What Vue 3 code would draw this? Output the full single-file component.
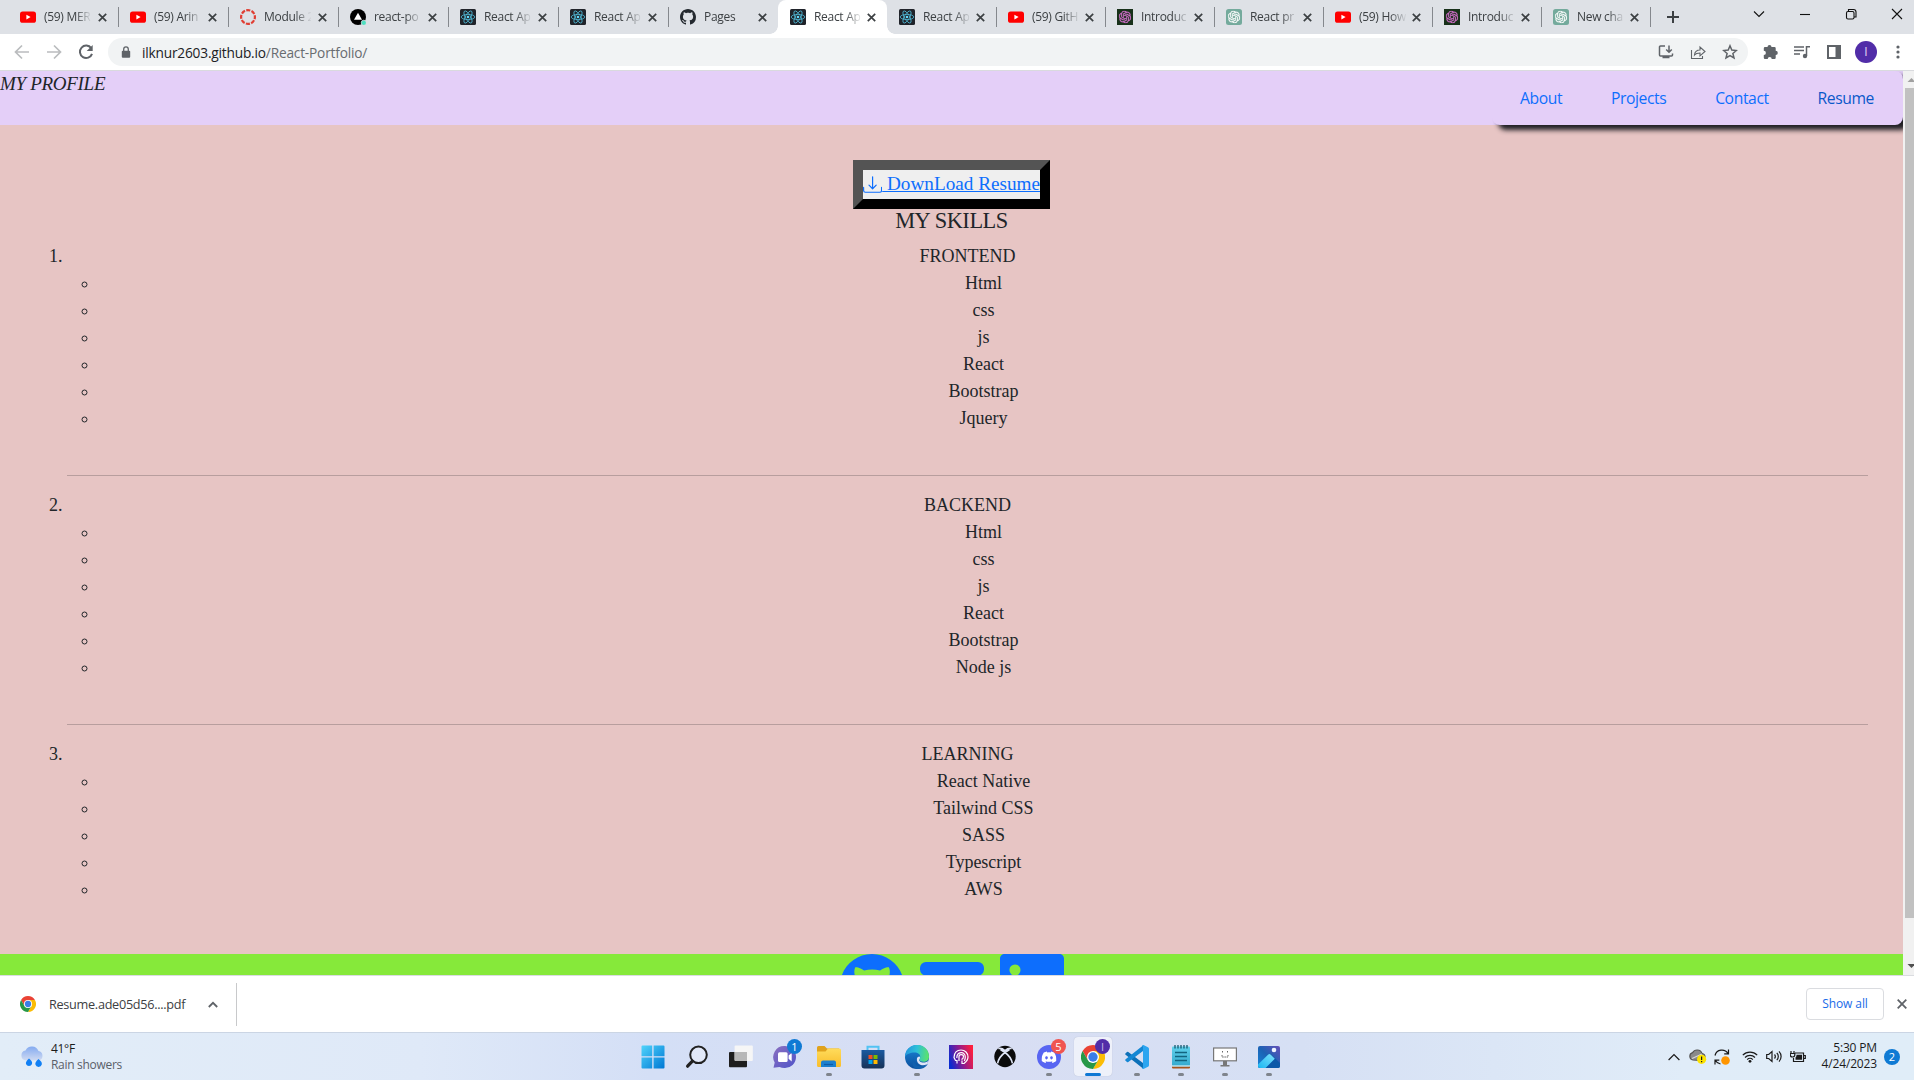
<script setup>
const tabs = [
  { icon: 'youtube', title: '(59) MER' },
  { icon: 'youtube', title: '(59) Arin' },
  { icon: 'canvas', title: 'Module 2' },
  { icon: 'netlify', title: 'react-po' },
  { icon: 'react', title: 'React Ap' },
  { icon: 'react', title: 'React Ap' },
  { icon: 'github', title: 'Pages' },
  { icon: 'react', title: 'React Ap', active: true },
  { icon: 'react', title: 'React Ap' },
  { icon: 'youtube', title: '(59) GitH' },
  { icon: 'openai-dark', title: 'Introduc' },
  { icon: 'openai', title: 'React pr' },
  { icon: 'youtube', title: '(59) How' },
  { icon: 'openai-dark', title: 'Introduc' },
  { icon: 'openai', title: 'New cha' },
]

const links = ['About', 'Projects', 'Contact', 'Resume']

const skills = [
  { name: 'FRONTEND', items: ['Html', 'css', 'js', 'React', 'Bootstrap', 'Jquery'] },
  { name: 'BACKEND', items: ['Html', 'css', 'js', 'React', 'Bootstrap', 'Node js'] },
  { name: 'LEARNING', items: ['React Native', 'Tailwind CSS', 'SASS', 'Typescript', 'AWS'] },
]

const apps = [
  { icon: 'start' },
  { icon: 'search' },
  { icon: 'taskview' },
  { icon: 'chat', badge: '1', kind: 'blue' },
  { icon: 'folder', open: true },
  { icon: 'store' },
  { icon: 'edge', open: true },
  { icon: 'mcafee' },
  { icon: 'xbox' },
  { icon: 'discord', badge: '5', kind: 'red', open: true },
  { icon: 'chrome', badge: 'I', kind: 'purple', open: true, focused: true },
  { icon: 'vscode', open: true },
  { icon: 'notepad', open: true },
  { icon: 'monitor', open: true },
  { icon: 'photos', open: true },
]
</script>

<template>
  <div class="screen">
    <svg class="defs" aria-hidden="true">
      <defs>
        <linearGradient id="g-start" x1="0" y1="0" x2="1" y2="1"><stop offset="0" stop-color="#4fd3fb" /><stop offset="1" stop-color="#0078d4" /></linearGradient>
        <linearGradient id="g-chat" x1="0" y1="0" x2="1" y2="1"><stop offset="0" stop-color="#8b6fc0" /><stop offset="1" stop-color="#4f54c8" /></linearGradient>
        <linearGradient id="g-folder" x1="0" y1="0" x2="0" y2="1"><stop offset="0" stop-color="#ffdc5c" /><stop offset="1" stop-color="#f9bd2b" /></linearGradient>
        <linearGradient id="g-store" x1="0" y1="0" x2="0" y2="1"><stop offset="0" stop-color="#1b5aa0" /><stop offset="1" stop-color="#173257" /></linearGradient>
        <linearGradient id="g-edge" x1="0" y1="0.2" x2="1" y2="0.3"><stop offset="0" stop-color="#2394dd" /><stop offset=".5" stop-color="#2fc0d8" /><stop offset="1" stop-color="#5be36b" /></linearGradient>
        <linearGradient id="g-edge2" x1="0" y1="0" x2="0" y2="1"><stop offset="0" stop-color="#1a86d8" /><stop offset="1" stop-color="#0c4f9c" /></linearGradient>
        <linearGradient id="g-mcafee" x1="0" y1="0.6" x2="1" y2="0.3"><stop offset="0" stop-color="#0b2bd0" /><stop offset=".5" stop-color="#8f1a8e" /><stop offset="1" stop-color="#ff1f3c" /></linearGradient>
        <linearGradient id="g-note" x1="0" y1="0" x2="0" y2="1"><stop offset="0" stop-color="#5fd0ea" /><stop offset="1" stop-color="#35a9cd" /></linearGradient>
        <linearGradient id="g-photo" x1="0" y1="1" x2="1" y2="0"><stop offset="0" stop-color="#1684d8" /><stop offset=".5" stop-color="#1c62b4" /><stop offset="1" stop-color="#6750b8" /></linearGradient>
        <linearGradient id="g-photo2" x1="0" y1="1" x2="1" y2="0"><stop offset="0" stop-color="#1ab6f2" /><stop offset="1" stop-color="#7ce0fb" /></linearGradient>
        <linearGradient id="g-cloud" x1="0" y1="0" x2="0" y2="1"><stop offset="0" stop-color="#83aaf0" /><stop offset="1" stop-color="#cfdaf2" /></linearGradient>
      </defs>

      <symbol id="youtube" viewBox="0 0 16 16"><rect y="2.4" width="16" height="11.4" rx="2.6" fill="#f00" /><path d="M6.4 5.7v4.8l4.2-2.4z" fill="#fff" /></symbol>
      <symbol id="canvas" viewBox="0 0 16 16"><circle cx="8" cy="8" r="6.9" fill="none" stroke="#e03e33" stroke-width="2.2" stroke-dasharray="4.1 1.32" stroke-dashoffset="2" /></symbol>
      <symbol id="netlify" viewBox="0 0 16 16"><circle cx="8" cy="8" r="8" fill="#000" /><path d="M8 3.8l4 7H4z" fill="#fff" /><circle cx="13.8" cy="13.8" r="2.6" fill="#4fe0c0" stroke="#dee1e6" stroke-width=".8" /></symbol>
      <symbol id="react" viewBox="0 0 16 16">
        <rect width="16" height="16" rx="1.5" fill="#20232a" />
        <g fill="none" stroke="#4eb4d0" stroke-width=".85"><ellipse cx="8" cy="8" rx="6.8" ry="2.6" /><ellipse cx="8" cy="8" rx="6.8" ry="2.6" transform="rotate(60 8 8)" /><ellipse cx="8" cy="8" rx="6.8" ry="2.6" transform="rotate(120 8 8)" /></g>
        <circle cx="8" cy="8" r="1.3" fill="#61dafb" />
      </symbol>
      <symbol id="github" viewBox="0 0 16 16"><path d="M8 0C3.58 0 0 3.58 0 8c0 3.54 2.29 6.53 5.47 7.59.4.07.55-.17.55-.38 0-.19-.01-.82-.01-1.49-2.01.37-2.53-.49-2.69-.94-.09-.23-.48-.94-.82-1.13-.28-.15-.68-.52-.01-.53.63-.01 1.08.58 1.23.82.72 1.21 1.87.87 2.33.66.07-.52.28-.87.51-1.07-1.78-.2-3.64-.89-3.64-3.95 0-.87.31-1.59.82-2.15-.08-.2-.36-1.02.08-2.12 0 0 .67-.21 2.2.82.64-.18 1.32-.27 2-.27s1.36.09 2 .27c1.53-1.04 2.2-.82 2.2-.82.44 1.1.16 1.92.08 2.12.51.56.82 1.27.82 2.15 0 3.07-1.87 3.75-3.65 3.95.29.25.54.73.54 1.48 0 1.07-.01 1.93-.01 2.2 0 .21.15.46.55.38A8.012 8.012 0 0 0 16 8c0-4.42-3.58-8-8-8z" fill="currentColor" /></symbol>
      <symbol id="knot" viewBox="0 0 24 24"><path fill="currentColor" d="M22.2819 9.8211a5.9847 5.9847 0 0 0-.5157-4.9108 6.0462 6.0462 0 0 0-6.5098-2.9A6.0651 6.0651 0 0 0 4.9807 4.1818a5.9847 5.9847 0 0 0-3.9977 2.9 6.0462 6.0462 0 0 0 .7427 7.0966 5.98 5.98 0 0 0 .511 4.9107 6.051 6.051 0 0 0 6.5146 2.9001A5.9847 5.9847 0 0 0 13.2599 24a6.0557 6.0557 0 0 0 5.7718-4.2058 5.9894 5.9894 0 0 0 3.9977-2.9001 6.0557 6.0557 0 0 0-.7475-7.0729zm-9.022 12.6081a4.4755 4.4755 0 0 1-2.8764-1.0408l.1419-.0804 4.7783-2.7582a.7948.7948 0 0 0 .3927-.6813v-6.7369l2.02 1.1686a.071.071 0 0 1 .038.052v5.5826a4.504 4.504 0 0 1-4.4945 4.4944zm-9.6607-4.1254a4.4708 4.4708 0 0 1-.5346-3.0137l.142.0852 4.783 2.7582a.7712.7712 0 0 0 .7806 0l5.8428-3.3685v2.3324a.0804.0804 0 0 1-.0332.0615L9.74 19.9502a4.4992 4.4992 0 0 1-6.1408-1.6464zM2.3408 7.8956a4.485 4.485 0 0 1 2.3655-1.9728V11.6a.7664.7664 0 0 0 .3879.6765l5.8144 3.3543-2.0201 1.1685a.0757.0757 0 0 1-.071 0l-4.8303-2.7865A4.504 4.504 0 0 1 2.3408 7.872zm16.5963 3.8558L13.1038 8.364 15.1192 7.2a.0757.0757 0 0 1 .071 0l4.8303 2.7913a4.4944 4.4944 0 0 1-.6765 8.1042v-5.6772a.79.79 0 0 0-.407-.667zm2.0107-3.0231l-.142-.0852-4.7735-2.7818a.7759.7759 0 0 0-.7854 0L9.409 9.2297V6.8974a.0662.0662 0 0 1 .0284-.0615l4.8303-2.7866a4.4992 4.4992 0 0 1 6.6802 4.66zM8.3065 12.863l-2.02-1.1638a.0804.0804 0 0 1-.038-.0567V6.0742a4.4992 4.4992 0 0 1 7.3757-3.4537l-.142.0805L8.704 5.459a.7948.7948 0 0 0-.3927.6813zm1.0976-2.3654l2.602-1.4998 2.6069 1.4998v2.9994l-2.5974 1.4997-2.6067-1.4997Z" /></symbol>
      <symbol id="openai" viewBox="0 0 16 16"><rect width="16" height="16" rx="2.5" fill="#74aa9c" /><use href="#knot" x="1.8" y="1.8" width="12.400" height="12.400" color="#fff" stroke="#fff" stroke-width=".5" /></symbol>
      <symbol id="openai-dark" viewBox="0 0 16 16"><rect width="16" height="16" fill="#18311a" /><use href="#knot" x="1.8" y="1.8" width="12.400" height="12.400" color="#d772d0" stroke="#d772d0" stroke-width=".5" /></symbol>

      <symbol id="chrome" viewBox="0 0 48 48">
        <path d="M24 0A24 24 0 0 0 3.2 12L13.6 30 24 24 24 12h20.8A24 24 0 0 0 24 0z" fill="#ea4335" />
        <path d="M44.8 12H24l10.4 18L24 48A24 24 0 0 0 44.8 12z" fill="#fbbc05" />
        <path d="M3.2 12 13.6 30 24 36l10.4-6L24 48A24 24 0 0 1 3.2 12z" fill="#279847" />
        <circle cx="24" cy="24" r="12" fill="#fff" /><circle cx="24" cy="24" r="9.4" fill="#3b7de8" />
      </symbol>

      <symbol id="start" viewBox="0 0 24 24"><path d="M.5 1.5a1 1 0 0 1 1-1h9.7v10.7H.5zM12.6.5h9.9a1 1 0 0 1 1 1v9.7H12.6zM.5 12.6h10.7v10.9H1.5a1 1 0 0 1-1-1zM12.6 12.6h10.9v9.9a1 1 0 0 1-1 1h-9.9z" fill="url(#g-start)" /></symbol>
      <symbol id="search" viewBox="0 0 24 24"><circle cx="13.5" cy="9.8" r="8.3" fill="#ffffff55" stroke="#222" stroke-width="2" /><path d="M7.4 16.2 2.6 21.2" stroke="#222" stroke-width="3.2" stroke-linecap="round" /></symbol>
      <symbol id="taskview" viewBox="0 0 24 24"><rect x="0" y="7" width="18" height="15.3" rx="1" fill="#1e1e1e" /><rect x="5.6" y=".6" width="18.2" height="15.4" rx="1" fill="#f6f6f6" /><path d="M5.6 7H18v9H6.6a1 1 0 0 1-1-1z" fill="#b8b8b8" /></symbol>
      <symbol id="chat" viewBox="0 0 24 24"><path d="M11.5 1A11 11 0 0 1 23 12 11 11 0 0 1 11.5 23c-1.9 0-3.5-.4-5-1.1L.5 22.8l1.200-5.300A11 11 0 0 1 11.500 1z" fill="url(#g-chat)" /><rect x="5" y="7.200" width="9.600" height="9.800" rx="1.500" fill="#fff" /><path d="M15.600 10.600 18.700 8v8.400l-3.100-2.600z" fill="#fff" /></symbol>
      <symbol id="folder" viewBox="0 0 24 24"><path d="M0 2.500A1.500 1.500 0 0 1 1.500 1h6l2.500 2.500H22V8H0z" fill="#e0a21c" /><path d="M0 6.500h8.500L11 3.500h11.500A1.500 1.500 0 0 1 24 5v15.500a1.500 1.500 0 0 1-1.500 1.500h-21A1.500 1.500 0 0 1 0 20.500z" fill="url(#g-folder)" /><path d="M4 22v-4.500A2 2 0 0 1 6 15.500h11a2 2 0 0 1 2 2V22z" fill="#1c7fce" /><path d="M7 19.500h9" stroke="#0d5ba8" stroke-width="1.200" /></symbol>
      <symbol id="store" viewBox="0 0 24 24"><path d="M6.500 6V1.800h11V6" fill="none" stroke="#53c3f3" stroke-width="2" /><path d="M.5 5h23v15.500a3 3 0 0 1-3 3h-17a3 3 0 0 1-3-3z" fill="url(#g-store)" /><path d="M7.500 10h4v4h-4z" fill="#f25022" /><path d="M12.500 10h4v4h-4z" fill="#7fba00" /><path d="M7.500 15h4v4h-4z" fill="#00a4ef" /><path d="M12.500 15h4v4h-4z" fill="#ffb900" /></symbol>
      <symbol id="edge" viewBox="0 0 24 24"><circle cx="12" cy="12" r="12" fill="url(#g-edge2)" /><path d="M0 12A12 12 0 0 1 24 11.500c0 3.400-2.500 5.300-5.500 5.300-2.800 0-4.300-1.200-4.300-2.200 0-.6 1-.9 1-2.900 0-2.300-2.200-4.200-5.700-4.200C5.500 7.500 1.200 9 0 12z" fill="url(#g-edge)" /><path d="M8.300 13.500c0 5 4 7.800 8 7.800 2.500 0 4.300-.7 5.800-2 .3-.3.600.1.400.4C20 23 16.500 24 13 24 6.500 23.500 6 16 9.500 11c-.8.900-1.200 1.600-1.200 2.500z" fill="#1260ad" /><path d="M14.200 14.600c-.5 1.400 1.300 3 4.300 3 2 0 3.800-.6 4.900-1.800-.3 1.300-.8 2.400-1.600 3.500-2 1.300-4.500 1.300-6.500.4-2.400-1-3.800-3.500-3.400-6 .3-1.400 1.300-2.300 2.600-2.300 1 1 .5 1.800-.3 3.200z" fill="#dfe6f7" /></symbol>
      <symbol id="mcafee" viewBox="0 0 24 24"><rect width="24" height="24" fill="url(#g-mcafee)" /><path d="M8 18.500v-3H6.500L5 12.500C5 7.500 8 5 12 5s7 3 7 7c0 3-2 5-4 6.500h-2v-3M10 16v-4.500c0-2.500 4.500-2.500 4.500 0 0 2-1 2.500-2 3M7.800 13c0-7 8.500-7 8.500-1 0 2-.5 3-1 4" fill="none" stroke="#fff" stroke-width="1.200" /></symbol>
      <symbol id="xbox" viewBox="0 0 24 24"><circle cx="12" cy="11.500" r="10.700" fill="#0b0b0b" /><path d="M5.300 3.600C8 2.900 10.500 4.300 12 5.500c1.500-1.200 4-2.600 6.700-1.900M12 7.500C8.500 10 5.500 14 4.600 18.300M12 7.500c3.500 2.500 6.500 6.500 7.400 10.800M12 7.500 7.500 4.500M12 7.500l4.500-3" fill="none" stroke="#dfe5f5" stroke-width="1.600" /></symbol>
      <symbol id="discord" viewBox="0 0 24 24"><circle cx="12" cy="12" r="12" fill="#5865f2" /><svg x="4.500" y="4.800" width="15" height="15" viewBox="0 0 16 16"><path fill="#fff" d="M13.545 2.907a13.200 13.200 0 0 0-3.257-1.011.05.05 0 0 0-.052.025c-.141.25-.297.577-.406.833a12.200 12.200 0 0 0-3.658 0 8 8 0 0 0-.412-.833.05.05 0 0 0-.052-.025c-1.125.194-2.220.534-3.257 1.011a.04.04 0 0 0-.021.018C.356 6.024-.213 9.047.066 12.032q.003.022.021.037a13.300 13.300 0 0 0 3.995 2.020.05.05 0 0 0 .056-.019q.463-.63.818-1.329c-.5-.2-.9-.4-1.300-.7l.3-.2c2.619 1.196 5.454 1.196 8.041 0l.3.2c-.4.300-.8.500-1.300.7.240.465.515.909.817 1.329a.05.05 0 0 0 .056.019 13.200 13.200 0 0 0 4.001-2.020.05.05 0 0 0 .021-.037c.334-3.451-.559-6.449-2.366-9.106zM5.347 10.214c-.789 0-1.438-.724-1.438-1.612s.637-1.613 1.438-1.613c.807 0 1.450.73 1.438 1.613 0 .888-.637 1.612-1.438 1.612m5.316 0c-.788 0-1.438-.724-1.438-1.612s.637-1.613 1.438-1.613c.807 0 1.451.73 1.438 1.613 0 .888-.631 1.612-1.438 1.612" /></svg></symbol>
      <symbol id="vscode" viewBox="0 0 24 24"><path d="M.6 8.300 2 7a1 1 0 0 1 1.300 0L18 18v5.500L.6 9.800a1 1 0 0 1 0-1.500z" fill="#0d70b8" /><path d="M.6 15.700 2 17a1 1 0 0 0 1.300 0L18 6V.5L.6 14.200a1 1 0 0 0 0 1.500z" fill="#1487d4" /><path d="M17 .3 18.500 0 23 2.200c.6.300 1 .9 1 1.600v16.400c0 .7-.4 1.300-1 1.600L18.500 24l-1.500-.3 1-1.200V1.500z" fill="#2ca5f0" /></symbol>
      <symbol id="notepad" viewBox="0 0 24 24"><path d="M3 21h18v1.500a1 1 0 0 1-1 1H4a1 1 0 0 1-1-1z" fill="#a5541c" /><rect x="3" y="1.500" width="18" height="20" rx="1" fill="url(#g-note)" /><path d="M3 21h18" stroke="#fff" stroke-width="1" /><path d="M6 0v3.500M9 0v3.500M12 0v3.500M15 0v3.500M18 0v3.500" stroke="#17586e" stroke-width="1.300" /><path d="M6 7.500h12M6 11.500h12M6 15.500h12" stroke="#12647f" stroke-width="1.300" /></symbol>
      <symbol id="monitor" viewBox="0 0 24 24"><rect x=".6" y="3" width="22.800" height="12.800" fill="#fff" stroke="#777" stroke-width="1.200" /><path d="M9.500 6v2M14.500 6v2M9 10v2h6v-2" fill="none" stroke="#666" stroke-width="1" stroke-dasharray="1.500 .7" /><path d="M10 16h4v4h2.500v1.500h-9V20H10z" fill="#777" /></symbol>
      <symbol id="photos" viewBox="0 0 24 24"><rect x="1" y="1" width="22" height="22" rx="2" fill="url(#g-photo)" /><path d="M1 20.500 11.500 9.800a2 2 0 0 1 2.800 0L23 18v3a2 2 0 0 1-2 2H3a2 2 0 0 1-2-2z" fill="#0b58a8" /><path d="M1 19.500 11 9.700a2 2 0 0 1 2.800 0l4 4L8.500 23H3a2 2 0 0 1-2-2z" fill="url(#g-photo2)" /><circle cx="17" cy="5" r="2.300" fill="#eef4ff" /></symbol>
    </svg>

    <!-- Tab strip -->
    <div class="tabstrip">
      <div class="tabs">
        <div v-for="(tab, i) in tabs" :key="i" class="tab" :class="{ active: tab.active, narrow: i > 6, nosep: i === 6 }">
          <svg class="favicon"><use :href="'#' + tab.icon" /></svg>
          <span class="tab-title">{{ tab.title }}</span>
          <svg class="tab-close" viewBox="0 0 9 9"><path d="M.8.8l7.400 7.400M8.200.8.8 8.200" /></svg>
        </div>
      </div>
      <svg class="new-tab" viewBox="0 0 12 12"><path d="M6 0v12M0 6h12" /></svg>
      <div class="window-controls">
        <svg viewBox="0 0 12 12"><path d="M1 3.500l5 5 5-5" /></svg>
        <svg viewBox="0 0 12 12"><path d="M1 6.500h10" /></svg>
        <svg viewBox="0 0 12 12"><rect x="1.500" y="3.500" width="7.500" height="7.500" rx="1.500" /><path d="M3.500 3.500V1.500h5a2.500 2.500 0 0 1 2.500 2.500v5H9" /></svg>
        <svg viewBox="0 0 12 12"><path d="M1 1l10 10M11 1 1 11" /></svg>
      </div>
    </div>

    <!-- Toolbar -->
    <div class="toolbar">
      <div class="nav-buttons">
        <svg class="dim" viewBox="0 0 16 16"><path d="M15 8H2M8 1.500 1.500 8 8 14.500" /></svg>
        <svg class="dim" viewBox="0 0 16 16"><path d="M1 8h13M8 1.500 14.500 8 8 14.500" /></svg>
        <svg class="bold" viewBox="0 0 16 16"><path d="M13.200 4.200A6.200 6.200 0 1 0 14 9.800" /><path class="solid" d="M14.700 1v6H8.700z" /></svg>
      </div>
      <div class="omnibox">
        <svg class="lock" viewBox="0 0 10 12"><path d="M2.700 5V3.200a2.300 2.300 0 0 1 4.600 0V5" fill="none" stroke="#5f6368" stroke-width="1.300" /><rect x=".8" y="4.700" width="8.400" height="7" rx="1" fill="#5f6368" /></svg>
        <span class="url">ilknur2603.github.io<i>/React-Portfolio/</i></span>
        <div class="omni-icons">
          <svg viewBox="0 0 16 16"><path d="M7 2H2.500a1 1 0 0 0-1 1v8a1 1 0 0 0 1 1h11a1 1 0 0 0 1-1V9.500M11 1.500v6.500M8.200 5.500 11 8.300l2.800-2.800M4.500 13.500h7" /></svg>
          <svg class="thin" viewBox="0 0 16 16"><path d="M1.500 6v8.500h11V12M4.500 11c.3-3.500 2.500-5 5.500-5V3l5 4.500-5 4.300V9c-2.500 0-4.200.4-5.500 2z" /></svg>
          <svg viewBox="0 0 16 16"><path d="M8 1.800l1.800 4.300 4.600.4-3.500 3 1.100 4.500L8 11.600 4 14l1.100-4.500-3.500-3 4.600-.4z" /></svg>
        </div>
      </div>
      <div class="tool-icons">
        <svg viewBox="0 0 16 16"><path class="solid" d="M5.500 3a2 2 0 0 1 4 0h3a1.200 1.200 0 0 1 1.200 1.200v2.600a2.100 2.100 0 0 1 0 4.200v2.800A1.200 1.200 0 0 1 12.500 15H9.700a2 2 0 0 0-4 0H3a1.200 1.200 0 0 1-1.200-1.200V11a2.100 2.100 0 0 0 0-4.200V4.200A1.200 1.200 0 0 1 3 3z" /></svg>
        <svg viewBox="0 0 16 16"><path d="M0 3h10M0 6.500h10M0 10h6M12.500 12V2.700H16" /><circle class="solid" cx="11" cy="12" r="2.200" /></svg>
        <svg viewBox="0 0 16 16"><path d="M2 2h12v12H2z" stroke-width="2" /><path class="solid" d="M9.500 2H14v12H9.500z" /></svg>
        <span class="avatar">I</span>
        <svg viewBox="0 0 16 16"><circle class="solid" cx="8" cy="3" r="1.600" /><circle class="solid" cx="8" cy="8" r="1.600" /><circle class="solid" cx="8" cy="13" r="1.600" /></svg>
      </div>
    </div>

    <!-- Page -->
    <div class="viewport">
      <div class="page">
        <header class="site-header">
          <span class="brand">MY PROFILE</span>
          <nav class="site-nav">
            <a v-for="link in links" :key="link" :class="['link-' + link.toLowerCase()]">{{ link }}</a>
          </nav>
        </header>
        <main class="resume">
          <button class="download"><a><svg viewBox="0 0 16 16"><path d="M.5 9.900a.5.5 0 0 1 .5.5v2.500a1 1 0 0 0 1 1h12a1 1 0 0 0 1-1v-2.500a.5.5 0 0 1 1 0v2.500a2 2 0 0 1-2 2H2a2 2 0 0 1-2-2v-2.500a.5.5 0 0 1 .5-.5z" /><path d="M7.646 11.854a.5.5 0 0 0 .708 0l3-3a.5.5 0 0 0-.708-.708L8.500 10.293V1.500a.5.5 0 0 0-1 0v8.793L5.354 8.146a.5.5 0 1 0-.708.708l3 3z" /></svg> DownLoad Resume</a></button>
          <h4>MY SKILLS</h4>
          <ol>
            <li v-for="(group, i) in skills" :key="group.name">
              {{ group.name }}
              <ul>
                <li v-for="item in group.items" :key="item">{{ item }}</li>
              </ul>
              <hr v-if="i < 2" />
            </li>
          </ol>
        </main>
        <footer class="site-footer">
          <svg class="social"><use href="#github" /></svg>
          <svg class="social" viewBox="0 0 64 64"><path d="M6 8h52a6 6 0 0 1 6 6v1.500a6 6 0 0 1-6 6H6a6 6 0 0 1-6-6V14a6 6 0 0 1 6-6z" fill="currentColor" /></svg>
          <svg class="social" viewBox="0 0 16 16"><path fill="currentColor" fill-rule="evenodd" d="M0 1.146C0 .513.526 0 1.175 0h13.650C15.474 0 16 .513 16 1.146v13.708c0 .633-.526 1.146-1.175 1.146H1.175C.526 16 0 15.487 0 14.854zM3.743 2.600a1.390 1.390 0 1 0 .001 2.780 1.390 1.390 0 0 0-.001-2.780z" /></svg>
        </footer>
      </div>
      <div class="scrollbar">
        <svg class="arrow" viewBox="0 0 17 17"><path d="M4.500 11 8.500 7l4 4z" fill="#a0a0a0" /></svg>
        <div class="thumb"></div>
        <svg class="arrow" viewBox="0 0 17 17"><path d="M4.500 6 8.500 10l4-4z" fill="#505050" /></svg>
      </div>
    </div>

    <!-- Downloads shelf -->
    <div class="shelf">
      <div class="shelf-item">
        <svg class="favicon"><use href="#chrome" /></svg>
        <span class="file">Resume.ade05d56....pdf</span>
        <svg class="caret" viewBox="0 0 10 7"><path d="M.8 6 5 1.800 9.200 6" /></svg>
      </div>
      <div class="shelf-actions">
        <span class="show-all">Show all</span>
        <svg class="shelf-close" viewBox="0 0 10 10"><path d="M.7.7l8.600 8.600M9.300.7.7 9.300" /></svg>
      </div>
    </div>

    <!-- Taskbar -->
    <div class="taskbar">
      <div class="weather">
        <svg viewBox="0 0 24 22"><path d="M6 14.500a5 5 0 0 1-.5-9.900A7 7 0 0 1 18.500 5 4.900 4.900 0 0 1 19 14.500z" fill="url(#g-cloud)" /><path d="M9 12.500c2.500 2 3.500 3.500 3 5.500a3.200 3.200 0 0 1-6 0c-.4-1.500.5-3.500 3-5.500zM18.500 13c2.500 2 3.800 3.500 3.300 5.500a3.300 3.300 0 0 1-6.400 0c-.4-1.500.6-3.500 3.100-5.500z" fill="#1280f4" /></svg>
        <div class="weather-text"><b>41°F</b><span>Rain showers</span></div>
      </div>
      <div class="apps">
        <div v-for="app in apps" :key="app.icon" class="app" :class="{ open: app.open, focused: app.focused }">
          <svg class="app-icon"><use :href="'#' + app.icon" /></svg>
          <span v-if="app.badge" class="badge" :class="app.kind">{{ app.badge }}</span>
        </div>
      </div>
      <div class="tray">
        <svg class="tray-caret" viewBox="0 0 12 8"><path d="M.6 7 6 1.500 11.400 7" /></svg>
        <svg class="tray-cloud" viewBox="0 0 18 16"><path d="M4 11a3.800 3.800 0 0 1-.4-7.400C5.500 0 11.500 0 13 4.500c2 .2 3 1.500 3 3.500l-5 3.500z" /><path d="M3 9.500 13 5" stroke-width="2" /><circle cx="12.600" cy="10.300" r="4.600" fill="#fde300" /><path d="M12.600 7.500v3.500M12.600 12v1.200" /></svg>
        <svg class="tray-sync" viewBox="0 0 18 18"><path d="M2 7.500C3.500 1 12 .5 15 5.500M15.500 1.500v4.300h-4.300M2 16.500v-4.300h4.300M2.500 12.500c1 2 2.500 3 5 3.500" /><circle cx="12.500" cy="12.500" r="4.300" fill="#ff9500" /></svg>
        <svg class="tray-wifi" viewBox="0 0 16 13"><path d="M.8 5.200a10.200 10.200 0 0 1 14.400 0M3 7.500a7 7 0 0 1 10 0M5.200 9.600a4 4 0 0 1 5.600 0" /><circle class="solid" cx="8" cy="11.300" r="1.400" /></svg>
        <svg class="tray-sound" viewBox="0 0 16 13"><path d="M.7 4.500v4h2L6 11.500v-10L2.700 4.500zM8.500 4.500c1 1.200 1 2.800 0 4M10.800 2.900c2 2 2 5.200 0 7.200M13 1.300c2.800 3 2.800 7.400 0 10.400" /></svg>
        <svg class="tray-battery" viewBox="0 0 16 13"><path d="M5 3h8.500v8.500h-10V8M14 5.500h1.300v3H14M1 1v2.500M4 1v2.500M.3 3.500h4.500V5c0 1.500-1 2-2.200 2S.3 6.500.3 5z" /><path class="solid" d="M6.500 4.700h5.500v5H5.500V7.500c.7-.5 1-1.500 1-2.800z" /></svg>
        <div class="clock"><span>5:30 PM</span><span>4/24/2023</span></div>
        <span class="notif">2</span>
      </div>
    </div>
  </div>
</template>

<style>
body {
  margin: 0;
  overflow: hidden;
}
</style>

<style scoped>
* {
  box-sizing: border-box;
}
.screen {
  width: 1914px;
  height: 1080px;
  display: flex;
  flex-direction: column;
  overflow: hidden;
  font-family: "Open Sans", "Noto Sans", sans-serif;
  background: #fff;
}
.defs {
  position: absolute;
  width: 0;
  height: 0;
}
svg {
  flex: none;
  display: block;
}

/* Tab strip */
.tabstrip {
  height: 34px;
  flex: none;
  display: flex;
  align-items: center;
  padding-left: 8px;
  background: #dee1e6;
}
.tabs {
  display: flex;
  height: 34px;
}
.tab {
  position: relative;
  width: 110px;
  display: flex;
  align-items: center;
  padding-left: 12px;
}
.tab.narrow {
  width: 109px;
}
.tab::after {
  content: "";
  position: absolute;
  right: -1px;
  top: 7px;
  width: 1px;
  height: 20px;
  background: #85888d;
}
.tab.active::after,
.tab.nosep::after {
  display: none;
}
.tab.active {
  background: #fff;
  border-radius: 8px 8px 0 0;
}
.tab.active::before {
  content: "";
  position: absolute;
  left: -8px;
  right: -8px;
  bottom: 0;
  height: 8px;
  background: radial-gradient(circle at 0 0, transparent 7.500px, #fff 8px) left / 8px 8px no-repeat,
    radial-gradient(circle at 100% 0, transparent 7.500px, #fff 8px) right / 8px 8px no-repeat;
}
.favicon {
  width: 16px;
  height: 16px;
  color: #24292f;
}
.tab-title {
  width: 47px;
  margin-left: 8px;
  padding-bottom: 1px;
  white-space: nowrap;
  font-size: 12px;
  letter-spacing: -0.3px;
  color: #3c4043;
  mask-image: linear-gradient(90deg, #000 66%, transparent 102%);
}
.tab-close {
  width: 9px;
  height: 9px;
  margin-left: 7px;
}
.narrow .tab-close {
  margin-left: 6px;
}
.tab-close path {
  stroke: #3c4043;
  stroke-width: 1.700;
}
.new-tab {
  width: 12px;
  height: 12px;
  margin-left: 17px;
}
.new-tab path {
  stroke: #3c4043;
  stroke-width: 2;
}
.window-controls {
  display: flex;
  gap: 34px;
  margin-left: auto;
  padding: 0 11px 6px 0;
}
.window-controls svg {
  width: 12px;
  height: 12px;
  fill: none;
  stroke: #111;
  stroke-width: 1.100;
}

/* Toolbar */
.toolbar {
  height: 37px;
  flex: none;
  display: flex;
  align-items: center;
  border-bottom: 1px solid #d9dade;
  background: #fff;
}
.nav-buttons {
  display: flex;
  gap: 16px;
  padding-left: 14px;
}
.nav-buttons svg,
.tool-icons svg,
.omni-icons svg {
  width: 16px;
  height: 16px;
  fill: none;
  stroke: #5f6368;
  stroke-width: 1.500;
}
.nav-buttons .dim {
  stroke: #babcbe;
  stroke-width: 1.700;
}
.nav-buttons .bold {
  stroke-width: 2;
}
svg .solid {
  fill: #5f6368;
  stroke: none;
}
.omnibox {
  width: 1640px;
  height: 28px;
  margin-left: 14px;
  border-radius: 14px;
  background: #f1f3f4;
  display: flex;
  align-items: center;
}
.lock {
  width: 10px;
  height: 12px;
  margin-left: 13px;
}
.url {
  margin-left: 11px;
  font-size: 13.700px;
  letter-spacing: -0.19px;
  color: #202124;
}
.url i {
  font-style: normal;
  color: #686c70;
}
.omni-icons {
  display: flex;
  gap: 16px;
  margin-left: auto;
  padding-right: 10px;
}
.omni-icons .thin {
  stroke-width: 1.100;
}
.tool-icons {
  display: flex;
  align-items: center;
  gap: 16px;
  margin-left: 14px;
}
.avatar {
  width: 22px;
  height: 22px;
  margin: 0 -3px;
  border-radius: 50%;
  background: #512da8;
  color: #e4dcf4;
  font-size: 12px;
  line-height: 22px;
  text-align: center;
}

/* Page viewport */
.viewport {
  height: 904px;
  flex: none;
  display: flex;
}
.page {
  width: 1903px;
  display: flex;
  flex-direction: column;
  overflow: hidden;
  background: #e7c5c4;
  color: #212529;
}
.site-header {
  height: 54px;
  flex: none;
  display: flex;
  justify-content: space-between;
  background: #e4cff8;
}
.brand {
  font: italic 19px/26px "Liberation Serif", serif;
  letter-spacing: -0.3px;
}
.site-nav {
  display: flex;
  justify-content: space-between;
  width: 411px;
  padding: 0 29px 0 28px;
  border-radius: 8px;
  background: #e4cff8;
  box-shadow: 6px 5px 5px 0 #1f1f24;
  font-size: 15.700px;
  line-height: 55px;
  letter-spacing: -0.4px;
  color: #0d6efd;
  clip-path: inset(0 0 -20px 0);
}
.site-nav .link-resume {
  color: #0a58ca;
}
.resume {
  height: 829px;
  flex: none;
  display: flex;
  flex-direction: column;
  align-items: center;
  padding-top: 35px;
  font: 18px/27px "Liberation Serif", "Times New Roman", serif;
  text-align: center;
}
.download {
  width: 197px;
  height: 49px;
  padding: 0;
  border: 10px outset #000;
  background: #efefef;
  color: #0d6efd;
  font: 19.200px/28.800px "Liberation Serif", serif;
  white-space: nowrap;
}
.download a {
  text-decoration: underline;
}
.download svg {
  display: inline-block;
  width: 1em;
  height: 1em;
  margin-bottom: -2px;
  vertical-align: -0.125em;
  fill: currentColor;
}
h4 {
  margin: 0 0 10.400px;
  font-size: 22.400px;
  line-height: 24px;
  letter-spacing: -0.450px;
  font-weight: 400;
}
ol {
  width: 1833px;
  margin: 0;
  padding-left: 32px;
}
ul {
  margin: 0;
  padding: 0 0 27px 32px;
  list-style: circle;
}
hr {
  height: 1px;
  margin: 16px 0;
  border: 0;
  background: #b89e9e;
}
.site-footer {
  height: 21px;
  flex: none;
  display: flex;
  justify-content: center;
  gap: 16px;
  padding-left: 1px;
  overflow: hidden;
  background: #86e93a;
  color: #0d6efd;
}
.social {
  width: 64px;
  height: 64px;
}
.scrollbar {
  width: 11px;
  overflow: hidden;
  display: flex;
  flex-direction: column;
  background: #f1f1f1;
}
.arrow {
  width: 17px;
  height: 17px;
}
.thumb {
  height: 830px;
  margin-left: 2px;
  background: #c1c1c1;
}
.scrollbar .arrow:last-child {
  margin-top: auto;
}

/* Downloads shelf */
.shelf {
  height: 57px;
  flex: none;
  display: flex;
  justify-content: space-between;
  align-items: center;
  border-top: 1px solid #dadce0;
  background: #fff;
}
.shelf-item {
  width: 237px;
  height: 43px;
  display: flex;
  align-items: center;
  padding-left: 20px;
  border-right: 1px solid #c8c9cb;
}
.file {
  width: 136px;
  margin-left: 13px;
  font-size: 12.700px;
  letter-spacing: -0.3px;
  white-space: nowrap;
  color: #3c4043;
}
.caret {
  width: 10px;
  height: 7px;
  margin-left: 23px;
}
.caret path,
.shelf-close path {
  fill: none;
  stroke: #5f6368;
  stroke-width: 1.800;
}
.shelf-actions {
  display: flex;
  align-items: center;
  gap: 13px;
  padding-right: 7px;
}
.show-all {
  width: 78px;
  height: 32px;
  border: 1px solid #dadce0;
  border-radius: 4px;
  text-align: center;
  font-size: 12px;
  line-height: 29px;
  letter-spacing: -0.1px;
  color: #1a6be8;
  font-weight: 500;
}
.shelf-close {
  width: 10px;
  height: 10px;
}

/* Taskbar */
.taskbar {
  height: 48px;
  flex: none;
  display: grid;
  grid-template-columns: 631px 660px 1fr;
  border-top: 1px solid #cbd5e4;
  background: linear-gradient(90deg, #e2edf8 0, #dfe9f8 22%, #d4dff6 34%, #d8def3 52%, #d6e0f4 68%, #e0ecf8 88%, #e0edf8 100%);
}
.weather {
  display: flex;
  align-items: center;
  gap: 7px;
  padding: 1px 0 0 20px;
}
.weather svg {
  width: 24px;
  height: 22px;
}
.weather-text {
  display: flex;
  flex-direction: column;
  font-size: 12px;
  line-height: 16px;
  letter-spacing: -0.3px;
  color: #5a6068;
}
.weather-text b {
  font-weight: 400;
  color: #1b1b1b;
}
.apps {
  display: flex;
}
.app {
  position: relative;
  width: 44px;
  height: 47px;
  display: flex;
  align-items: center;
  justify-content: center;
}
.app-icon {
  width: 24px;
  height: 24px;
  position: relative;
}
.app.open::after {
  content: "";
  position: absolute;
  left: 19px;
  bottom: 4px;
  width: 6px;
  height: 3px;
  border-radius: 2px;
  background: #7f848c;
}
.app.focused::before {
  content: "";
  position: absolute;
  left: 3px;
  top: 4px;
  width: 38px;
  height: 39px;
  border-radius: 4px;
  background: #eef1fa;
  box-shadow: 0 0 1px #a9b0c4;
}
.app.focused::after {
  left: 14px;
  width: 16px;
  background: #0f78d4;
}
.badge {
  position: absolute;
  left: 24px;
  top: 6px;
  width: 15px;
  height: 15px;
  border-radius: 50%;
  color: #fff;
  font-size: 11px;
  line-height: 15px;
  text-align: center;
}
.badge.blue {
  background: #0f7ad4;
}
.badge.red {
  background: #f05450;
}
.badge.purple {
  background: #512da8;
  color: #c5b8e6;
}
.tray {
  display: flex;
  align-items: center;
  padding-right: 14px;
  justify-content: flex-end;
}
.tray path {
  fill: none;
  stroke: #1a1a1a;
  stroke-width: 1.200;
}
.tray path.solid,
.tray .solid {
  fill: #1a1a1a;
  stroke: none;
}
.tray-caret {
  width: 12px;
  height: 8px;
}
.tray .tray-cloud path:first-child {
  fill: #8a8a8a;
  stroke: #555;
}
.tray .tray-cloud path:nth-child(2) {
  stroke: #d8d8d8;
}
.tray-cloud {
  width: 18px;
  height: 16px;
  margin-left: 9px;
}
.tray-sync {
  width: 18px;
  height: 18px;
  margin-left: 6px;
}
.tray-wifi {
  width: 16px;
  height: 13px;
  margin-left: 11px;
}
.tray-sound {
  width: 16px;
  height: 13px;
  margin-left: 8px;
}
.tray-battery {
  width: 16px;
  height: 13px;
  margin-left: 8px;
}
.clock {
  width: 70px;
  display: flex;
  flex-direction: column;
  margin-left: 1px;
  padding-bottom: 1px;
  text-align: right;
  font-size: 12px;
  line-height: 16px;
  letter-spacing: -0.150px;
  color: #1b1b1b;
}
.notif {
  width: 16px;
  height: 16px;
  margin-left: 7px;
  border-radius: 50%;
  background: #0f7ad4;
  color: #fff;
  font-size: 11px;
  line-height: 16px;
  text-align: center;
}
</style>
